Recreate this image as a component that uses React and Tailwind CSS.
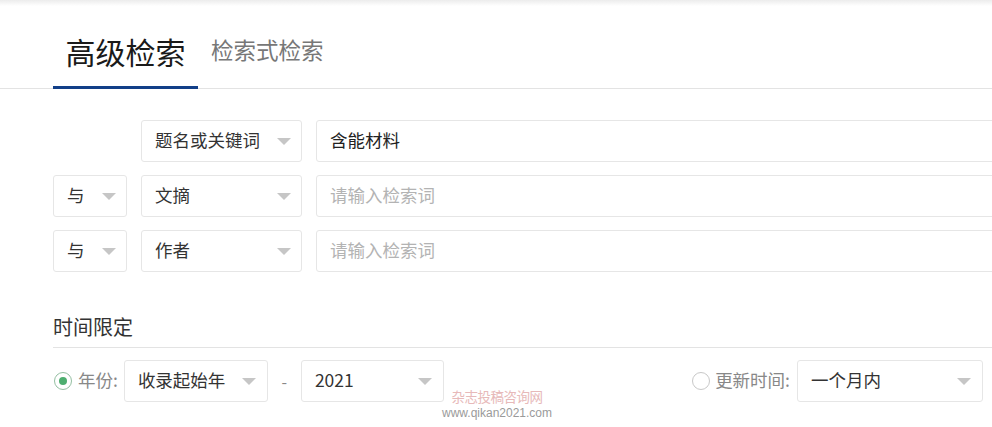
import React from "react";

const font = { fontFamily: '"Noto Sans CJK SC", "Noto Sans", sans-serif' };

const Caret = () => (
  <span className="w-0 h-0 border-l-[7px] border-r-[7px] border-t-[7px] border-l-transparent border-r-transparent border-t-[#c6c6c6]" />
);

const Select = ({ value, width, padR = "pr-[10px]" }) => (
  <div
    className={`${width} h-[42px] shrink-0 flex items-center justify-between pl-[13px] ${padR} bg-white border border-[#e6e6e6] rounded-[3px] text-[17.5px] leading-none text-[#333]`}
  >
    <span className="-mt-[2px]">{value}</span>
    <Caret />
  </div>
);

const Radio = ({ checked }) => (
  <span
    className={`w-[18px] h-[18px] rounded-full border flex items-center justify-center ${
      checked ? "border-[#94bfa2]" : "border-[#c8c8c8]"
    }`}
  >
    {checked ? <span className="w-[8px] h-[8px] rounded-full bg-[#4dae6f]" /> : null}
  </span>
);

const SearchRow = ({ logic, field, value }) => (
  <div className="flex items-center gap-[14px]">
    {logic ? (
      <Select value={logic} width="w-[74px]" />
    ) : (
      <div className="w-[74px] h-[42px] shrink-0" />
    )}
    <Select value={field} width="w-[161px]" />
    <div className="w-[700px] h-[42px] shrink-0 flex items-center pl-[13px] border border-[#e6e6e6] rounded-[3px] text-[17.5px] leading-none">
      {value ? (
        <span className="-mt-[2px] text-[#222]">{value}</span>
      ) : (
        <span className="-mt-[2px] text-[#b3b3b3]">请输入检索词</span>
      )}
    </div>
  </div>
);

export default function App() {
  return (
    <div className="w-[992px] h-[427px] overflow-hidden bg-white relative" style={font}>
      <div className="h-[6px] bg-gradient-to-b from-[#ececec] to-white" />

      {/* tabs */}
      <div className="h-[83px] flex items-end pl-[53px] border-b border-[#e3e3e3]">
        <div className="w-[145px] text-center pb-[20px] border-b-[3px] border-[#123f88] -mb-px text-[30px] leading-[30px] text-[#1a1a1a]">
          高级检索
        </div>
        <div className="pl-[13px] pb-[28px] text-[22.5px] leading-[22px] text-[#777]">检索式检索</div>
      </div>

      {/* search rows */}
      <div className="pl-[53px] pt-[31px] flex flex-col gap-[13px]">
        <SearchRow field="题名或关键词" value="含能材料" />
        <SearchRow logic="与" field="文摘" />
        <SearchRow logic="与" field="作者" />
      </div>

      {/* time limit */}
      <div className="pl-[53px] mt-[45px]">
        <div className="pb-[10px] border-b border-[#e3e3e3] text-[20px] leading-[20px] text-[#333]">时间限定</div>
        <div className="mt-[12px] flex items-center pr-[9px]">
          <div className="flex items-center">
            <span className="ml-px">
              <Radio checked />
            </span>
            <span className="ml-[6px] mr-[6px] -mt-[2px] text-[17.5px] text-[#888] leading-none">年份:</span>
            <Select value="收录起始年" width="w-[144px]" padR="pr-[11px]" />
            <span className="w-[33px] text-center text-[#888] text-[16px]">-</span>
            <Select value="2021" width="w-[143px]" padR="pr-[11px]" />
          </div>
          <div className="ml-auto flex items-center">
            <Radio />
            <span className="ml-[5px] mr-[7px] -mt-[2px] text-[17.5px] text-[#888] leading-none">更新时间:</span>
            <Select value="一个月内" width="w-[186px]" padR="pr-[11px]" />
          </div>
        </div>
      </div>

      {/* watermark */}
      <div className="absolute left-[443px] top-[390px] w-[108px] flex flex-col items-center leading-none">
        <span className="text-[13.5px] text-[#e7b9b9] tracking-[-0.5px]">杂志投稿咨询网</span>
        <span className="mt-[3px] text-[12px] text-[#9a9a9a]" style={{ fontFamily: '"Liberation Sans", sans-serif' }}>
          www.qikan2021.com
        </span>
      </div>
    </div>
  );
}
